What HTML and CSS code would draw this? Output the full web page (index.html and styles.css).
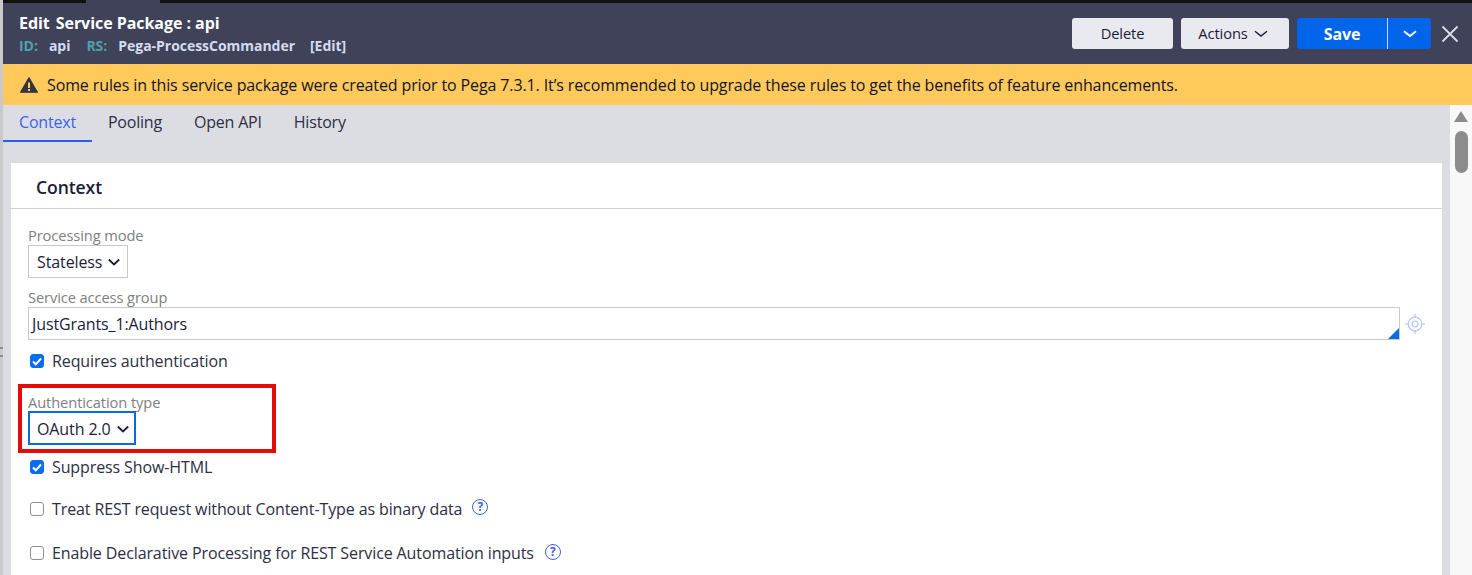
FILE: index.html
```html
<!DOCTYPE html>
<html lang="en">
<head>
<meta charset="utf-8">
<title>Edit Service Package : api</title>
<link rel="stylesheet" href="styles.css">
</head>
<body>
<div class="page">
  <div class="rail"><span class="grip"></span></div>
  <div class="main">
    <div class="topstrip"><span class="strip-a"></span><span class="strip-b"></span><span class="strip-c"></span></div>
    <header class="header">
      <div class="titles">
        <div class="title"><span>Edit</span><span>Service Package : api</span></div>
        <div class="meta">
          <span class="key">ID:</span><span class="val val-id">api</span>
          <span class="key">RS:</span><span class="val val-rs">Pega-ProcessCommander</span>
          <span class="val">[Edit]</span>
        </div>
      </div>
      <div class="actions">
        <button class="btn btn-delete">Delete</button>
        <button class="btn btn-actions">Actions
          <svg class="chev" width="14" height="8" viewBox="0 0 14 8"><path d="M1 1.2 7 6l6-4.8" fill="none" stroke="#1b1b3a" stroke-width="1.4"/></svg>
        </button>
        <div class="save">
          <button class="save-main">Save</button>
          <button class="save-more"><svg width="14" height="8" viewBox="0 0 14 8"><path d="M1 1.2 7 6l6-4.8" fill="none" stroke="#fff" stroke-width="1.8"/></svg></button>
        </div>
        <svg class="close" width="18" height="18" viewBox="0 0 18 18"><path d="M1.500 1.500l15 15M16.500 1.500l-15 15" stroke="#dcdde2" stroke-width="1.800" fill="none"/></svg>
      </div>
    </header>
    <div class="banner">
      <svg width="18" height="16" viewBox="0 0 18 16"><path d="M9 .8 17.400 15.200H.6z" fill="#33343f" stroke="#33343f" stroke-width="1.200" stroke-linejoin="round"/><rect x="8" y="5.500" width="2" height="5.500" fill="#ffc95c"/><rect x="8" y="12" width="2" height="2" fill="#ffc95c"/></svg>
      <span>Some rules in this service package were created prior to Pega 7.3.1. It’s recommended to upgrade these rules to get the benefits of feature enhancements.</span>
    </div>
    <div class="body">
      <div class="content">
        <nav class="tabs">
          <a class="tab active">Context</a>
          <a class="tab">Pooling</a>
          <a class="tab">Open API</a>
          <a class="tab">History</a>
        </nav>
        <section class="card">
          <h2 class="card-title">Context</h2>
          <div class="form">
            <label class="lab">Processing mode</label>
            <div class="select select-mode">Stateless <svg width="12" height="8" viewBox="0 0 12 8"><path d="M.8 1.500 6 6.500l5.200-5" fill="none" stroke="#1b1b3a" stroke-width="1.800"/></svg></div>
            <label class="lab lab-group">Service access group</label>
            <div class="input-row">
              <div class="input">JustGrants_1:Authors<span class="corner"></span></div>
              <svg class="target" width="20" height="20" viewBox="0 0 20 20" fill="none" stroke="#b4c4f7" stroke-width="1.200"><circle cx="10" cy="10" r="6.800"/><circle cx="10" cy="10" r="3"/><path d="M10 0v3.200M10 16.800V20M0 10h3.200M16.800 10H20"/></svg>
            </div>
            <div class="check check-req"><span class="box on"><svg width="10" height="9" viewBox="0 0 10 9"><path d="M1 4.500 3.800 7.300 9 1.500" fill="none" stroke="#fff" stroke-width="2"/></svg></span>Requires authentication</div>
            <div class="annotated">
              <label class="lab">Authentication type</label>
              <div class="select select-auth">OAuth 2.0 <svg width="12" height="8" viewBox="0 0 12 8"><path d="M.8 1.500 6 6.500l5.200-5" fill="none" stroke="#1b1b3a" stroke-width="1.800"/></svg></div>
              <span class="redbox"></span>
            </div>
            <div class="check check-sup"><span class="box on"><svg width="10" height="9" viewBox="0 0 10 9"><path d="M1 4.500 3.800 7.300 9 1.500" fill="none" stroke="#fff" stroke-width="2"/></svg></span>Suppress Show-HTML</div>
            <div class="check check-rest"><span class="box"></span>Treat REST request without Content-Type as binary data<span class="help help-a">?</span></div>
            <div class="check check-decl"><span class="box"></span>Enable Declarative Processing for REST Service Automation inputs<span class="help help-b">?</span></div>
          </div>
        </section>
      </div>
      <aside class="scrollbar">
        <span class="arrow"></span>
        <span class="thumb"></span>
      </aside>
    </div>
  </div>
</div>
</body>
</html>
```
FILE: styles.css
```css
* { box-sizing: border-box; }
html, body { margin: 0; height: 100%; overflow: hidden; }
body { font-family: "Open Sans", "Noto Sans", sans-serif; color: #1b1b3a; background: #dcdde2; letter-spacing: -.11px; }
button { font-family: inherit; border: 0; padding: 0; letter-spacing: inherit; }

.page { display: flex; width: 1472px; height: 575px; overflow: hidden; }
.rail { width: 3px; flex: none; background: #c9c9cc; position: relative; }
.grip { position: absolute; left: 0; top: 347px; width: 3px; height: 10px; border-top: 2px solid #8d8d8d; border-bottom: 2px solid #8d8d8d; }
.main { flex: 1; min-width: 0; display: flex; flex-direction: column; }

.topstrip { display: flex; height: 3px; flex: none; }
.strip-a { width: 83px; background: #111; }
.strip-b { width: 74px; background: #40425a; }
.strip-c { flex: 1; background: #111; }

.header { height: 61px; flex: none; background: #40425a; display: flex; justify-content: space-between; padding: 0 13px 0 16px; }
.titles { padding-top: 9px; }
.title { display: flex; gap: 6px; color: #fff; font-size: 16px; font-weight: 700; line-height: 22px; letter-spacing: -.05px; }
.meta { display: flex; align-items: center; font-size: 14px; font-weight: 700; line-height: 18px; margin-top: 3px; letter-spacing: -.03px; }
.key { color: #4fa3a8; }
.val { color: #d5dcf0; }
.val-id { margin: 0 16px 0 11px; }
.val-rs { margin: 0 15px 0 11px; }

.actions { display: flex; align-items: center; }
.btn { height: 31px; background: #e9eaf0; color: #1b1b3a; font-size: 14.700px; border-radius: 3px; display: flex; align-items: center; justify-content: center; gap: 6px; padding-bottom: 2px; }
.btn-delete { width: 101px; margin-right: 8px; }
.btn-actions { width: 108px; margin-right: 8px; padding-right: 4px; }
.chev { margin-top: 2px; }
.save { display: flex; width: 134px; height: 31px; border-radius: 3px; background: #0065ea; overflow: hidden; margin-right: 10px; }
.save-main { width: 91px; height: 31px; background: none; color: #fff; font-size: 16px; font-weight: 700; border-right: 1px solid #c8dcf8; }
.save-more { flex: 1; background: none; display: flex; align-items: center; justify-content: center; }
.close { display: block; }

.banner { height: 41px; flex: none; background: #ffc95c; display: flex; align-items: center; gap: 9px; padding-left: 17px; font-size: 16px; letter-spacing: -.117px; color: #14142b; }

.body { flex: 1; min-height: 0; display: flex; }
.content { flex: 1; min-width: 0; padding-right: 8px; }
.tabs { display: flex; height: 37px; }
.tab { height: 37px; font-size: 16px; letter-spacing: -.2px; line-height: 34px; color: #2d2e45; padding: 0 16px; }
.tab.active { color: #3a62ee; border-bottom: 2px solid #2f5bf5; }

.card { margin: 21px 0 0 8px; background: #fff; height: 500px; }
.card-title { margin: 0; height: 46px; padding: 12px 0 0 25px; font-size: 17.600px; line-height: 25px; font-weight: 600; border-bottom: 1px solid #cfd0dc; color: #1b1b3a; }
.form { position: relative; padding: 17px 0 0 17px; }
.lab { display: block; font-size: 14.700px; line-height: 18px; margin-bottom: 1px; color: #808080; }
.select { display: flex; align-items: center; height: 33px; border: 1px solid #c9c9c9; padding-left: 8px; font-size: 16px; gap: 6px; color: #1b1b3a; }
.select-mode { width: 100px; }
.select-auth { width: 108px; height: 34px; margin-top: -1px; border: 2px solid #0a6adf; padding: 1px 0 0 7px; }
.lab-group { margin-top: 10px; }
.input-row { display: flex; align-items: center; gap: 5px; }
.input { position: relative; width: 1372px; height: 33px; border: 1px solid #c9c9c9; font-size: 16px; line-height: 32px; padding-left: 3px; color: #1b1b3a; }
.corner { position: absolute; right: 0; bottom: 0; border-style: solid; border-width: 0 0 11px 11px; border-color: transparent transparent #0a6adf transparent; }
.target { display: block; }

.check { display: flex; align-items: center; font-size: 16px; line-height: 22px; color: #2d2e45; }
.box { width: 14px; height: 14px; margin: 0 8px 0 2px; border: 1.500px solid #8f8f8f; border-radius: 3px; background: #fff; display: flex; align-items: center; justify-content: center; flex: none; }
.box.on { background: #0b6cf0; border-color: #0b6cf0; }
.check-req { margin-top: 10px; }
.annotated { position: relative; margin-top: 25px; width: 240px; height: 52px; }
.annotated .lab { margin-top: -4px; }
.redbox { position: absolute; left: -10px; top: -9px; width: 258px; height: 69px; border: 4px solid #e40b0b; }
.check-sup { margin-top: 11px; }
.check-rest { margin-top: 20px; }
.check-decl { margin-top: 22px; }
.help { width: 16px; height: 16px; border: 1.500px solid #3a62ee; border-radius: 50%; color: #3a62ee; font-size: 12px; font-weight: 700; line-height: 13px; text-align: center; letter-spacing: 0; }
.help-a { margin-left: 10px; margin-top: -5px; }
.help-b { margin-left: 11px; margin-top: -3px; }

.scrollbar { width: 22px; flex: none; background: #f8f8f8; position: relative; display: flex; flex-direction: column; align-items: center; padding-top: 6px; }
.arrow { width: 0; height: 0; border-style: solid; border-width: 0 7px 11px 7px; border-color: transparent transparent #8c8c8c transparent; }
.thumb { width: 13px; height: 42px; margin-top: 9px; background: #8c8c8c; border-radius: 7px; }
```
